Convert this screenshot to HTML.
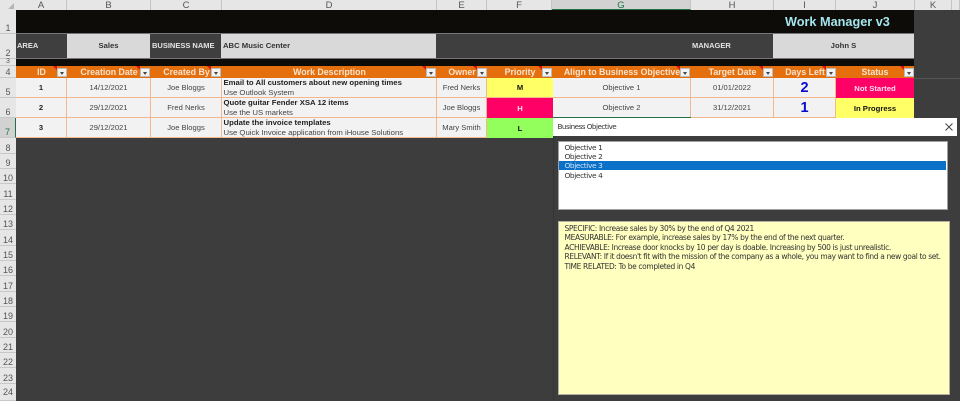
<!DOCTYPE html>
<html><head><meta charset="utf-8"><style>
*{box-sizing:border-box}
html,body{margin:0;padding:0}
body{width:960px;height:401px;overflow:hidden;position:relative;background:#3d3d3d;font-family:"Liberation Sans",sans-serif;color:#333}
.a{position:absolute;white-space:nowrap}
.c{display:flex;align-items:center;justify-content:center;text-align:center}
.ch{top:0;height:10px;background:#e6e6e6;border-right:1px solid #c4c4c4;font-size:9.5px;color:#555;line-height:11px;text-align:center}
.rh{left:0;width:16px;background:#e6e6e6;border-bottom:1px solid #c8c8c8;font-size:9px;color:#555;text-align:center}
.rh span{position:absolute;left:0;right:0;bottom:-1px;line-height:11px}
.hd{top:66px;height:12px;background:#e56f0d;color:#f8e4d0;font-weight:bold;font-size:8.8px;line-height:12.5px;text-align:center}
.fb{top:68px;width:10px;height:9px;background:#f2f2f2;border:1px solid #bbb}
.fb:after{content:"";position:absolute;left:2px;top:3px;border:2.5px solid transparent;border-top:3px solid #444;border-bottom:0}
.tri{top:66px;width:0;height:0;border-top:4px solid #e01010;border-left:4px solid transparent}
.cell{background:#f2f2f2;font-size:7.6px;color:#444;border-right:1px solid #f0b88c;border-bottom:1px solid #f0b88c}
.d{background:#f2f2f2;border-right:1px solid #f0b88c;border-bottom:1px solid #f0b88c;font-size:7.75px;color:#444;padding-left:1.5px;line-height:10px}
.d b{display:block;color:#222}
.lab{background:#3f3f3f;color:#e4e4e4;font-weight:bold;font-size:7.5px;top:34px;height:24px;line-height:24px}
.val{background:#d9d9d9;color:#333;font-weight:bold;font-size:7.7px;top:34px;height:24px;line-height:24px}
.st{font-weight:bold;font-size:7.7px}
.bl{font-size:14.5px;color:#0a0ad0;font-weight:bold}
</style></head><body>
<!-- corner -->
<div class="a" style="left:0;top:0;width:16px;height:10px;background:#e6e6e6"></div>
<div class="a" style="left:8px;top:3px;width:0;height:0;border-bottom:6px solid #b5b5b5;border-left:6px solid transparent"></div>
<!-- column headers -->
<div class="a ch" style="left:16px;width:51px">A</div>
<div class="a ch" style="left:67px;width:84px">B</div>
<div class="a ch" style="left:151px;width:71px">C</div>
<div class="a ch" style="left:222px;width:215px">D</div>
<div class="a ch" style="left:437px;width:50px">E</div>
<div class="a ch" style="left:487px;width:65px">F</div>
<div class="a ch" style="left:552px;width:139px;background:#d2d2d2;border-bottom:1px solid #217346;color:#217346">G</div>
<div class="a ch" style="left:691px;width:83px">H</div>
<div class="a ch" style="left:774px;width:62px">I</div>
<div class="a ch" style="left:836px;width:79px">J</div>
<div class="a ch" style="left:915px;width:37px">K</div>
<div class="a ch" style="left:952px;width:8px"></div>
<!-- row headers -->
<div class="a rh" style="top:10px;height:24px"><span>1</span></div>
<div class="a rh" style="top:34px;height:25px"><span>2</span></div>
<div class="a rh" style="top:59px;height:7px;font-size:7px"><span style="line-height:7px;bottom:0">3</span></div>
<div class="a rh" style="top:66px;height:12px"><span>4</span></div>
<div class="a rh" style="top:78px;height:20px"><span>5</span></div>
<div class="a rh" style="top:98px;height:20px"><span>6</span></div>
<div class="a rh" style="top:118px;height:20px;background:#d2d2d2;color:#217346;border-right:1px solid #217346"><span>7</span></div>
<div class="a rh" style="top:138px;height:16px"><span>8</span></div>
<div class="a rh" style="top:154px;height:15px"><span>9</span></div>
<div class="a rh" style="top:169px;height:15px"><span>10</span></div>
<div class="a rh" style="top:184px;height:16px"><span>11</span></div>
<div class="a rh" style="top:200px;height:15px"><span>12</span></div>
<div class="a rh" style="top:215px;height:15px"><span>13</span></div>
<div class="a rh" style="top:230px;height:16px"><span>14</span></div>
<div class="a rh" style="top:246px;height:15px"><span>15</span></div>
<div class="a rh" style="top:261px;height:15px"><span>16</span></div>
<div class="a rh" style="top:276px;height:16px"><span>17</span></div>
<div class="a rh" style="top:292px;height:15px"><span>18</span></div>
<div class="a rh" style="top:307px;height:15px"><span>19</span></div>
<div class="a rh" style="top:322px;height:16px"><span>20</span></div>
<div class="a rh" style="top:338px;height:15px"><span>21</span></div>
<div class="a rh" style="top:353px;height:15px"><span>22</span></div>
<div class="a rh" style="top:368px;height:16px"><span>23</span></div>
<div class="a rh" style="top:384px;height:17px"><span style="bottom:2px">24</span></div>
<!-- black banner -->
<div class="a" style="left:16px;top:10px;width:898px;height:23px;background:#0d0c08"></div>
<div class="a" style="left:785px;top:12px;font-size:12.7px;font-weight:bold;color:#a5e6ee;line-height:20px">Work Manager v3</div>
<div class="a" style="left:16px;top:33px;width:898px;height:26px;background:#777"></div>
<div class="a" style="left:16px;top:59px;width:898px;height:7px;background:#0d0c08"></div>
<div class="a" style="left:914px;top:78px;width:46px;height:1px;background:#555"></div>
<!-- row 2 -->
<div class="a lab" style="left:16px;width:51px;padding-left:1px">AREA</div>
<div class="a val" style="left:67px;width:83px;text-align:center">Sales</div>
<div class="a lab" style="left:150px;width:71px;padding-left:2px">BUSINESS NAME</div>
<div class="a val" style="left:221px;width:215px;padding-left:2px">ABC Music Center</div>
<div class="a lab" style="left:436px;width:254px"></div>
<div class="a lab" style="left:690px;width:83px;padding-left:2px">MANAGER</div>
<div class="a val" style="left:773px;width:141px;text-align:center">John S</div>
<!-- row 4 headers -->
<div class="a hd" style="left:16px;width:51px">ID</div>
<div class="a hd" style="left:67px;width:84px">Creation Date</div>
<div class="a hd" style="left:151px;width:71px">Created By</div>
<div class="a hd" style="left:222px;width:215px">Work Description</div>
<div class="a hd" style="left:437px;width:50px">Owner</div>
<div class="a hd" style="left:487px;width:66px">Priority</div>
<div class="a hd" style="left:553px;width:138px">Align to Business Objective</div>
<div class="a hd" style="left:691px;width:83px">Target Date</div>
<div class="a hd" style="left:774px;width:62px">Days Left</div>
<div class="a hd" style="left:836px;width:78px">Status</div>
<div class="a fb" style="left:57px"></div>
<div class="a fb" style="left:140px"></div>
<div class="a fb" style="left:211px"></div>
<div class="a fb" style="left:426px"></div>
<div class="a fb" style="left:477px"></div>
<div class="a fb" style="left:542px"></div>
<div class="a fb" style="left:680px"></div>
<div class="a fb" style="left:763px"></div>
<div class="a fb" style="left:826px"></div>
<div class="a fb" style="left:904px"></div>
<div class="a tri" style="left:53px"></div>
<div class="a tri" style="left:136px"></div>
<div class="a tri" style="left:207px"></div>
<div class="a tri" style="left:422px"></div>
<div class="a tri" style="left:473px"></div>
<div class="a tri" style="left:538px"></div>
<div class="a tri" style="left:676px"></div>
<div class="a tri" style="left:759px"></div>
<div class="a tri" style="left:822px"></div>
<div class="a tri" style="left:900px"></div>
<!-- row 5 -->
<div class="a c cell" style="left:16px;top:78px;width:51px;height:20px;font-weight:bold;color:#222">1</div>
<div class="a c cell" style="left:67px;top:78px;width:84px;height:20px">14/12/2021</div>
<div class="a c cell" style="left:151px;top:78px;width:71px;height:20px">Joe Bloggs</div>
<div class="a d" style="left:222px;top:78px;width:215px;height:20px"><b>Email to All customers about new opening times</b>Use Outlook System</div>
<div class="a c cell" style="left:437px;top:78px;width:50px;height:20px">Fred Nerks</div>
<div class="a c cell" style="left:487px;top:78px;width:66px;height:20px;background:#ffff66;color:#111;font-weight:bold;border:0;border-bottom:1px solid #f0b88c">M</div>
<div class="a c cell" style="left:553px;top:78px;width:138px;height:20px">Objective 1</div>
<div class="a c cell" style="left:691px;top:78px;width:83px;height:20px">01/01/2022</div>
<div class="a c cell bl" style="left:774px;top:78px;width:62px;height:20px">2</div>
<div class="a c st" style="left:836px;top:78px;width:78px;height:20px;background:#ff0066;color:#fde">Not Started</div>
<!-- row 6 -->
<div class="a c cell" style="left:16px;top:98px;width:51px;height:20px;font-weight:bold;color:#222">2</div>
<div class="a c cell" style="left:67px;top:98px;width:84px;height:20px">29/12/2021</div>
<div class="a c cell" style="left:151px;top:98px;width:71px;height:20px">Fred Nerks</div>
<div class="a d" style="left:222px;top:98px;width:215px;height:20px"><b>Quote guitar Fender XSA 12 items</b>Use the US markets</div>
<div class="a c cell" style="left:437px;top:98px;width:50px;height:20px">Joe Bloggs</div>
<div class="a c st" style="left:487px;top:98px;width:66px;height:20px;background:#ff0066;color:#fde">H</div>
<div class="a c cell" style="left:553px;top:98px;width:138px;height:20px">Objective 2</div>
<div class="a c cell" style="left:691px;top:98px;width:83px;height:20px">31/12/2021</div>
<div class="a c cell bl" style="left:774px;top:98px;width:62px;height:20px">1</div>
<div class="a c st" style="left:836px;top:98px;width:78px;height:20px;background:#ffff66;color:#111">In Progress</div>
<!-- row 7 -->
<div class="a c cell" style="left:16px;top:118px;width:51px;height:20px;font-weight:bold;color:#222">3</div>
<div class="a c cell" style="left:67px;top:118px;width:84px;height:20px">29/12/2021</div>
<div class="a c cell" style="left:151px;top:118px;width:71px;height:20px">Joe Bloggs</div>
<div class="a d" style="left:222px;top:118px;width:215px;height:20px"><b>Update the invoice templates</b>Use Quick Invoice application from iHouse Solutions</div>
<div class="a c cell" style="left:437px;top:118px;width:50px;height:20px">Mary Smith</div>
<div class="a c st" style="left:487px;top:118px;width:66px;height:20px;background:#92ff5c;color:#111">L</div>
<div class="a" style="left:553px;top:117px;width:138px;height:1px;background:#217346"></div>
<!-- dialog -->
<div class="a" style="left:553px;top:136px;width:404px;height:265px;background:#3d3d3d;border-left:1px solid #353535"></div>
<div class="a" style="left:553px;top:118px;width:404px;height:18px;background:#fff;font-size:7.2px;line-height:18px;color:#333;padding-left:4.5px;font-family:'DejaVu Sans',sans-serif;letter-spacing:-.52px">Business Objective</div>
<svg class="a" style="left:944px;top:122px" width="10" height="10" viewBox="0 0 10 10"><path d="M1.5 1.5L8.5 8.5M8.5 1.5L1.5 8.5" stroke="#444" stroke-width="1" fill="none"/></svg>
<div class="a" style="left:557.5px;top:141px;width:390px;height:68.5px;background:#fff;border:1px solid #a0a0a0"></div>
<div class="a" style="left:559px;top:161px;width:387px;height:9px;background:#0b70c8"></div>
<div class="a" style="left:564.5px;top:142.5px;font-size:7.4px;line-height:9.45px;color:#333;font-family:'DejaVu Sans',sans-serif;letter-spacing:-.38px">Objective 1<br>Objective 2<br><span style="color:#cfe4f7">Objective 3</span><br>Objective 4</div>
<div class="a" style="left:557.5px;top:221px;width:392px;height:173.5px;background:#ffffc0;border:1px solid #b0b0a0"></div>
<div class="a" style="left:564.5px;top:224px;font-size:7.5px;line-height:9.45px;color:#333;font-family:'DejaVu Sans',sans-serif;letter-spacing:-.368px">SPECIFIC: Increase sales by 30% by the end of Q4 2021<br>MEASURABLE: For example, increase sales by 17% by the end of the next quarter.<br>ACHIEVABLE: Increase door knocks by 10 per day is doable. Increasing by 500 is just unrealistic.<br>RELEVANT: If it doesn't fit with the mission of the company as a whole, you may want to find a new goal to set.<br>TIME RELATED: To be completed in Q4</div>
</body></html>
